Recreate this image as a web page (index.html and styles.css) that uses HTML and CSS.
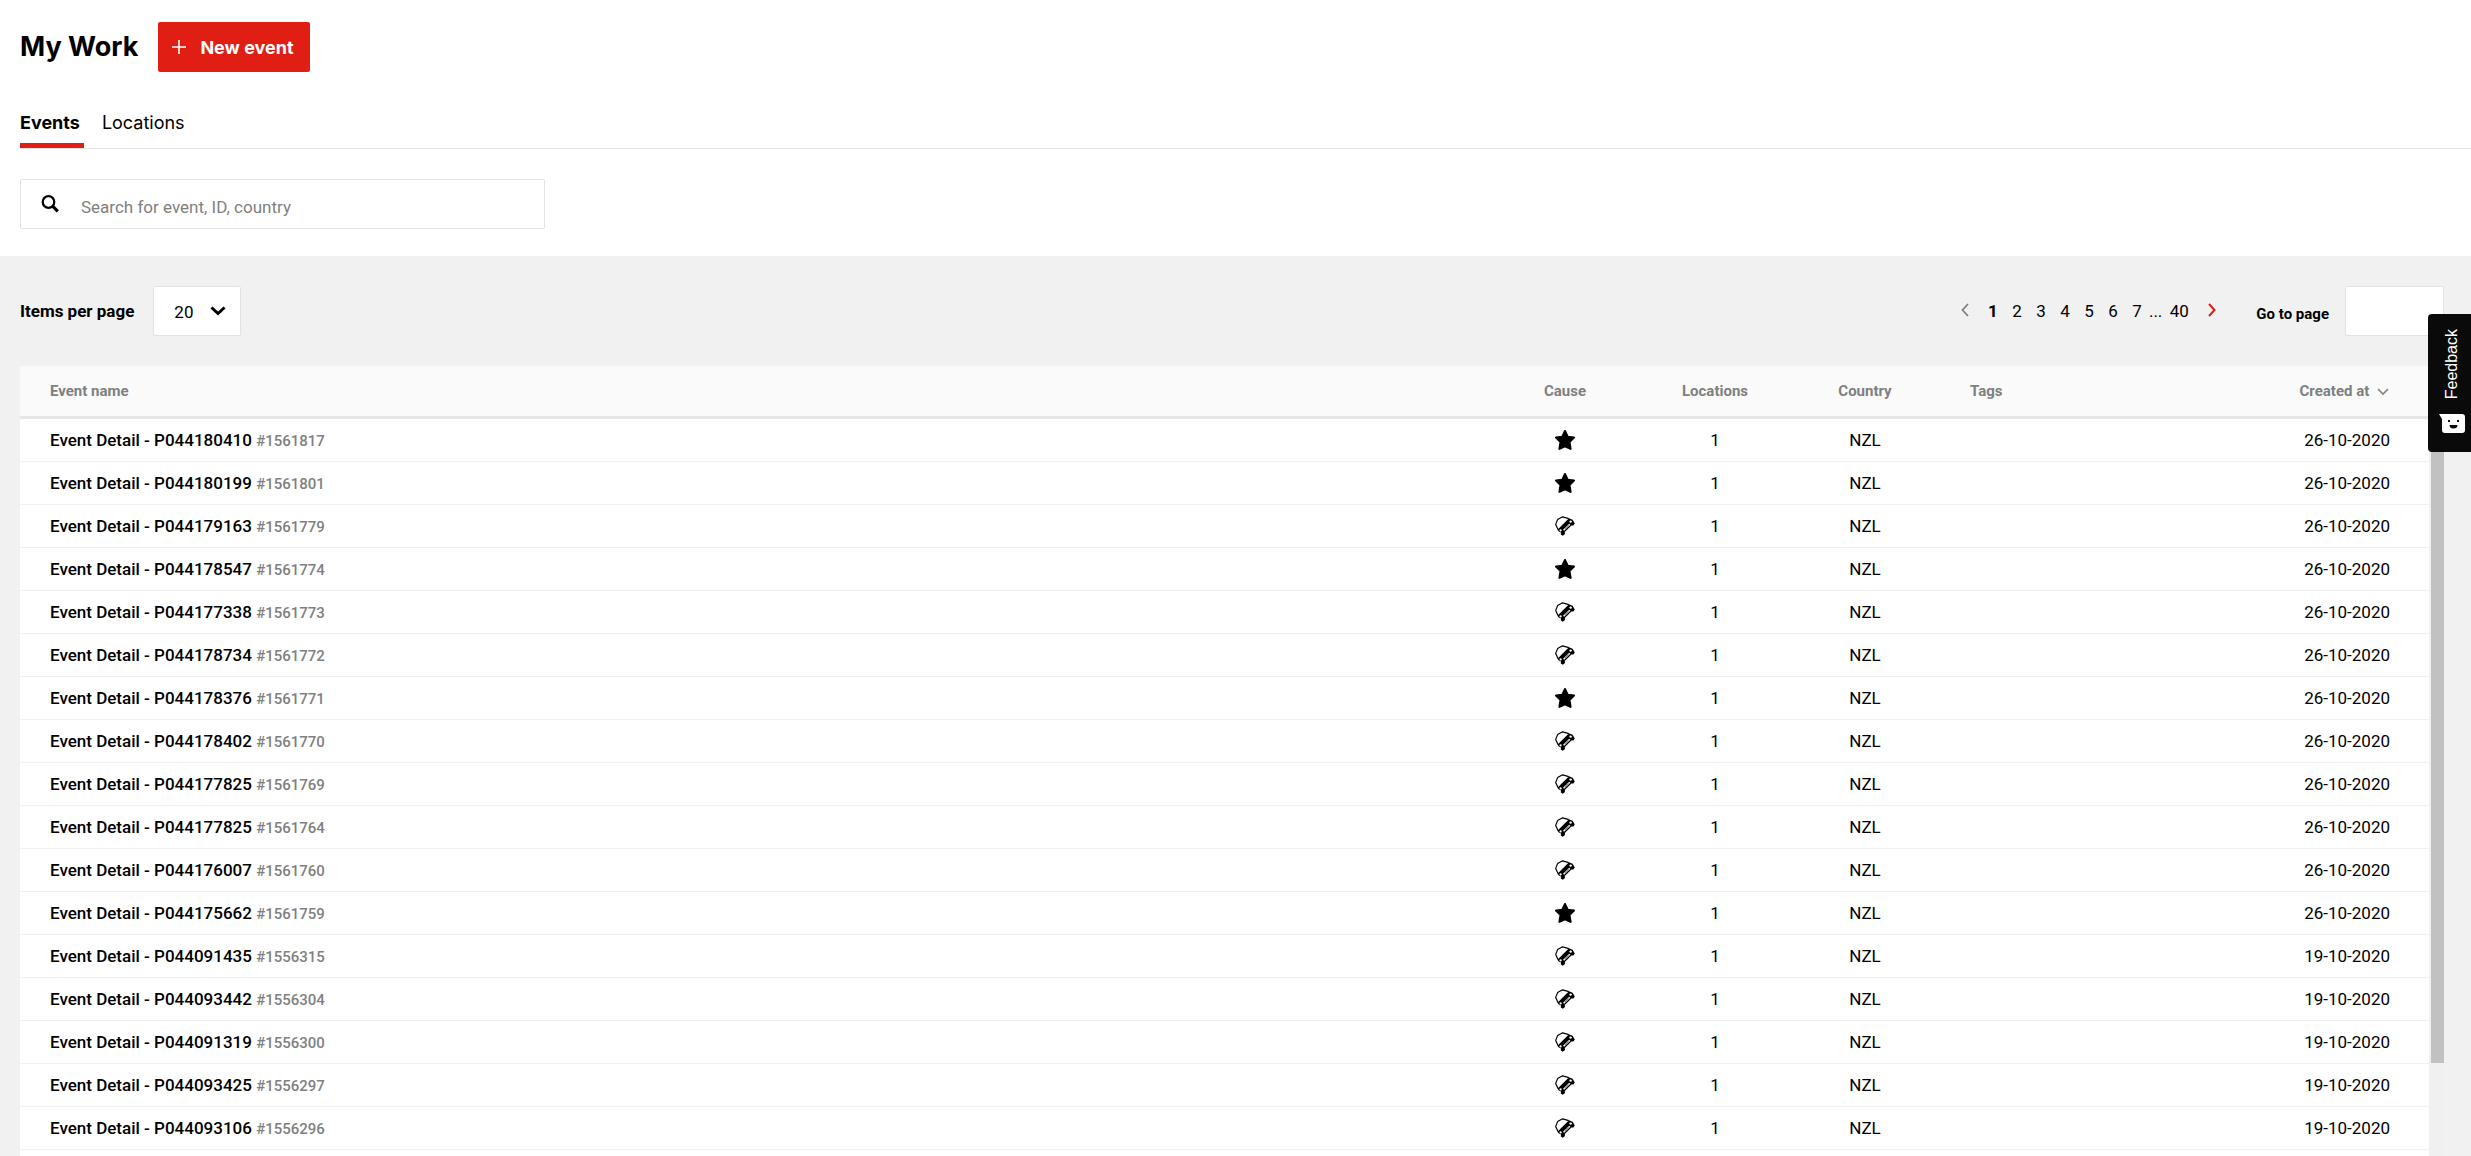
FILE: index.html
```html
<!DOCTYPE html>
<html lang="en">
  <head>
    <meta charset="UTF-8">
    <title>My Work</title>
    <link rel="stylesheet" href="styles.css">
  </head>
  <body>
    <svg class="sprite" aria-hidden="true">
      <symbol id="star" viewBox="0 0 20 20">
        <path d="M10 1l2.7 5.7 6.3.9-4.5 4.4 1.1 6.9L10 16.4l-5.6 2.5L5.500 12 1 7.6l6.3-.9z" fill="#000" stroke="#000" stroke-width="2" stroke-linejoin="round"/>
      </symbol>
      <symbol id="car" viewBox="0 0 20 20">
        <path d="M3 13.500L.7 8.400 2.600 3.600 7.600.8l6.200 1.800" fill="#fff" stroke="#000" stroke-width="1.200" stroke-linejoin="round"/>
        <path d="M2.400 13.800L14 2.200l3.600 1.600 2.200 3.800-1.400 2-2-.2-6.600 6.600.2 2-2.200 1.800-2-1.200.2-2.200-2.200-.8z" fill="#000"/>
        <path d="M8.600 14.200l6.200-6" stroke="#fff" stroke-width="1.600"/>
        <path d="M9.800 13l3.800-3.600" stroke="#000" stroke-width=".5"/>
        <circle cx="5.600" cy="14.400" r="1.100" fill="#fff"/>
        <circle cx="15.600" cy="5.600" r="1.200" fill="#fff"/>
      </symbol>
    </svg>
    <header class="top">
      <div class="title-row">
        <h1>My Work</h1>
        <button type="button" class="new-event">
          <svg width="14" height="14" viewBox="0 0 14 14"><path d="M7 0v14M0 7h14" stroke="#fff" stroke-width="1.6"/></svg>
          New event
        </button>
      </div>
      <nav class="tabs">
        <a href="#events" class="tab active">Events</a>
        <a href="#locations" class="tab">Locations</a>
      </nav>
      <label class="search">
        <svg width="18" height="18" viewBox="0 0 18 18"><circle cx="7.5" cy="7" r="5.8" fill="none" stroke="#000" stroke-width="2.2"/><path d="M11.8 11.4l5 5" stroke="#000" stroke-width="3"/></svg>
        <input type="text" placeholder="Search for event, ID, country" aria-label="Search">
      </label>
    </header>
    <main class="content">
      <div class="toolbar">
        <label for="per-page" class="per-page-label">Items per page</label>
        <div class="select">
          <select id="per-page">
            <option>20</option>
            <option>50</option>
          </select>
          <svg width="16" height="10" viewBox="0 0 16 10"><path d="M1.5 1.5L8 7.5l6.5-6" fill="none" stroke="#000" stroke-width="3"/></svg>
        </div>
        <nav class="pager">
          <a href="#prev" aria-label="Previous"><svg width="8" height="14" viewBox="0 0 8 14"><path d="M7 1L1.5 7 7 13" fill="none" stroke="#7f8080" stroke-width="1.8"/></svg></a>
          <a href="#1" class="current">1</a>
          <a href="#2">2</a>
          <a href="#3">3</a>
          <a href="#4">4</a>
          <a href="#5">5</a>
          <a href="#6">6</a>
          <a href="#7">7</a>
          <span class="dots">...</span>
          <a href="#40" class="last">40</a>
          <a href="#next" aria-label="Next"><svg width="8" height="14" viewBox="0 0 8 14"><path d="M1 1l5.5 6L1 13" fill="none" stroke="#e01e13" stroke-width="2"/></svg></a>
        </nav>
        <label for="goto" class="goto-label">Go to page</label>
        <input type="text" id="goto" class="goto">
      </div>
      <div class="list">
        <div class="table-wrap">
          <table>
            <thead>
              <tr>
                <th class="name">Event name</th>
                <th class="mid">Cause</th>
                <th class="mid">Locations</th>
                <th class="mid">Country</th>
                <th class="tags">Tags</th>
                <th class="date">Created at <svg width="12" height="8" viewBox="0 0 12 8"><path d="M1 1l5 5 5-5" fill="none" stroke="#7f8080" stroke-width="1.6"/></svg></th>
              </tr>
            </thead>
            <tbody>
              <tr><td class="name">Event Detail - P044180410 <small>#1561817</small></td><td><svg class="cause"><use href="#star"/></svg></td><td>1</td><td>NZL</td><td></td><td class="date">26-10-2020</td></tr>
              <tr><td class="name">Event Detail - P044180199 <small>#1561801</small></td><td><svg class="cause"><use href="#star"/></svg></td><td>1</td><td>NZL</td><td></td><td class="date">26-10-2020</td></tr>
              <tr><td class="name">Event Detail - P044179163 <small>#1561779</small></td><td><svg class="cause"><use href="#car"/></svg></td><td>1</td><td>NZL</td><td></td><td class="date">26-10-2020</td></tr>
              <tr><td class="name">Event Detail - P044178547 <small>#1561774</small></td><td><svg class="cause"><use href="#star"/></svg></td><td>1</td><td>NZL</td><td></td><td class="date">26-10-2020</td></tr>
              <tr><td class="name">Event Detail - P044177338 <small>#1561773</small></td><td><svg class="cause"><use href="#car"/></svg></td><td>1</td><td>NZL</td><td></td><td class="date">26-10-2020</td></tr>
              <tr><td class="name">Event Detail - P044178734 <small>#1561772</small></td><td><svg class="cause"><use href="#car"/></svg></td><td>1</td><td>NZL</td><td></td><td class="date">26-10-2020</td></tr>
              <tr><td class="name">Event Detail - P044178376 <small>#1561771</small></td><td><svg class="cause"><use href="#star"/></svg></td><td>1</td><td>NZL</td><td></td><td class="date">26-10-2020</td></tr>
              <tr><td class="name">Event Detail - P044178402 <small>#1561770</small></td><td><svg class="cause"><use href="#car"/></svg></td><td>1</td><td>NZL</td><td></td><td class="date">26-10-2020</td></tr>
              <tr><td class="name">Event Detail - P044177825 <small>#1561769</small></td><td><svg class="cause"><use href="#car"/></svg></td><td>1</td><td>NZL</td><td></td><td class="date">26-10-2020</td></tr>
              <tr><td class="name">Event Detail - P044177825 <small>#1561764</small></td><td><svg class="cause"><use href="#car"/></svg></td><td>1</td><td>NZL</td><td></td><td class="date">26-10-2020</td></tr>
              <tr><td class="name">Event Detail - P044176007 <small>#1561760</small></td><td><svg class="cause"><use href="#car"/></svg></td><td>1</td><td>NZL</td><td></td><td class="date">26-10-2020</td></tr>
              <tr><td class="name">Event Detail - P044175662 <small>#1561759</small></td><td><svg class="cause"><use href="#star"/></svg></td><td>1</td><td>NZL</td><td></td><td class="date">26-10-2020</td></tr>
              <tr><td class="name">Event Detail - P044091435 <small>#1556315</small></td><td><svg class="cause"><use href="#car"/></svg></td><td>1</td><td>NZL</td><td></td><td class="date">19-10-2020</td></tr>
              <tr><td class="name">Event Detail - P044093442 <small>#1556304</small></td><td><svg class="cause"><use href="#car"/></svg></td><td>1</td><td>NZL</td><td></td><td class="date">19-10-2020</td></tr>
              <tr><td class="name">Event Detail - P044091319 <small>#1556300</small></td><td><svg class="cause"><use href="#car"/></svg></td><td>1</td><td>NZL</td><td></td><td class="date">19-10-2020</td></tr>
              <tr><td class="name">Event Detail - P044093425 <small>#1556297</small></td><td><svg class="cause"><use href="#car"/></svg></td><td>1</td><td>NZL</td><td></td><td class="date">19-10-2020</td></tr>
              <tr><td class="name">Event Detail - P044093106 <small>#1556296</small></td><td><svg class="cause"><use href="#car"/></svg></td><td>1</td><td>NZL</td><td></td><td class="date">19-10-2020</td></tr>
            </tbody>
          </table>
        </div>
        <div class="scrollbar"><div class="thumb"></div></div>
      </div>
    </main>
    <button type="button" class="feedback">
      <span>Feedback</span>
      <svg width="26" height="20" viewBox="0 0 26 20">
        <path d="M0 0h23a3 3 0 0 1 3 3v13a3 3 0 0 1-3 3H6a3 3 0 0 1-3-3V5z" fill="#fff"/>
        <rect x="9" y="6" width="2" height="2" fill="#0a0a0a"/>
        <rect x="18" y="6" width="2" height="2" fill="#0a0a0a"/>
        <path d="M10.5 11h8a4 3.5 0 0 1-8 0z" fill="#0a0a0a"/>
      </svg>
    </button>
  </body>
</html>
```
FILE: styles.css
```css
* {
  box-sizing: border-box;
}

body {
  margin: 0;
  height: 100vh;
  overflow: hidden;
  display: flex;
  flex-direction: column;
  font-family: Roboto, sans-serif;
  font-size: 17px;
  color: #000;
  background: #fff;
}

a {
  color: inherit;
  text-decoration: none;
}

input,
select,
button {
  font: inherit;
  color: inherit;
}

.sprite {
  display: none;
}

.top {
  padding: 22px 0 27px 20px;
}

.title-row {
  display: flex;
  align-items: center;
  gap: 20px;
}

h1 {
  margin: 0;
  font-family: Inter, sans-serif;
  font-size: 27px;
  line-height: 32px;
  font-weight: 700;
}

.new-event {
  display: flex;
  align-items: center;
  gap: 14px;
  height: 50px;
  padding: 0 16px 0 14px;
  border: 0;
  border-radius: 2px;
  background: #e01e13;
  color: #fff;
  font-family: Inter, sans-serif;
  font-size: 18px;
  font-weight: 700;
}

.tabs {
  display: flex;
  gap: 18px;
  margin-top: 36px;
  border-bottom: 1px solid #e3e3e3;
  font-family: Inter, sans-serif;
  font-size: 18px;
  line-height: 30px;
}

.tab {
  padding: 0 4px 5px 0;
  border-bottom: 5px solid transparent;
}

.tab.active {
  border-color: #e01e13;
  font-weight: 700;
}

.search {
  display: flex;
  align-items: center;
  gap: 22px;
  width: 525px;
  height: 50px;
  margin-top: 30px;
  padding: 0 20px;
  border: 1px solid #e3e3e3;
  border-radius: 2px;
}

.search input {
  flex: 1;
  height: 100%;
  padding: 6px 0 0;
  border: 0;
  outline: 0;
}

.search input::placeholder {
  color: #7f8080;
}

.content {
  flex: 1;
  min-height: 0;
  display: flex;
  flex-direction: column;
  padding: 30px 27px 0 20px;
  background: #f1f1f1;
}

.toolbar {
  display: flex;
  align-items: center;
  margin-bottom: 30px;
}

.per-page-label {
  margin-right: 19px;
  font-weight: 700;
}

.select {
  position: relative;
}

.select select {
  appearance: none;
  width: 88px;
  height: 50px;
  padding: 2px 20px 0;
  border: 1px solid #e3e3e3;
  border-radius: 2px;
  background: #fff;
}

.select svg {
  position: absolute;
  right: 15px;
  top: 20px;
  pointer-events: none;
}

.pager {
  display: flex;
  align-items: center;
  margin-left: auto;
}

.pager a {
  min-width: 24px;
  text-align: center;
}

.pager .current {
  margin-left: 4px;
  font-weight: 700;
}

.pager .last {
  min-width: 34px;
}

.pager a:last-child {
  margin-left: 4px;
}

.goto-label {
  margin: 5px 16px 0 32px;
  font-size: 15px;
  font-weight: 700;
}

.goto {
  width: 99px;
  height: 50px;
  border: 1px solid #e3e3e3;
  border-radius: 2px;
  background: #fff;
}

.list {
  flex: 1;
  min-height: 0;
  display: flex;
}

.table-wrap {
  flex: 1;
  overflow: hidden;
  background: #fff;
}

table {
  width: 100%;
  table-layout: fixed;
  border-collapse: separate;
  border-spacing: 0;
}

th {
  height: 53px;
  padding: 0;
  background: #fafafa;
  border-bottom: 3px solid #e6e6e6;
  color: #7f8080;
  font-size: 15px;
  font-weight: 700;
}

td {
  height: 43px;
  padding: 0;
  border-bottom: 1px solid #f1f1f1;
  text-align: center;
}

th.mid {
  width: 150px;
}

th.tags {
  width: 245px;
  padding-left: 30px;
  text-align: left;
}

.name {
  padding-left: 30px;
  text-align: left;
}

td.name {
  font-weight: 500;
}

.name small {
  color: #7f8080;
  font-size: 15px;
}

.date {
  width: 244px;
  padding-right: 39px;
  text-align: right;
}

th.date {
  padding-right: 40px;
}

th svg {
  margin-left: 4px;
}

.cause {
  display: block;
  width: 20px;
  height: 20px;
  margin: 0 auto;
}

.scrollbar {
  width: 15px;
  padding: 17px 0 0 2px;
  background: #f0f0f0;
}

.thumb {
  height: 88%;
  background: #c1c1c1;
}

/* sticks to the window edge, over the list */
.feedback {
  position: absolute;
  right: 0;
  top: 314px;
  display: flex;
  flex-direction: column;
  align-items: center;
  gap: 15px;
  width: 43px;
  padding: 15px 0 18px 5px;
  border: 0;
  border-radius: 4px 0 0 4px;
  background: #0a0a0a;
  color: #fff;
  font-family: "Liberation Sans", sans-serif;
  font-size: 16px;
}

.feedback span {
  writing-mode: vertical-rl;
  transform: rotate(180deg);
}
```
